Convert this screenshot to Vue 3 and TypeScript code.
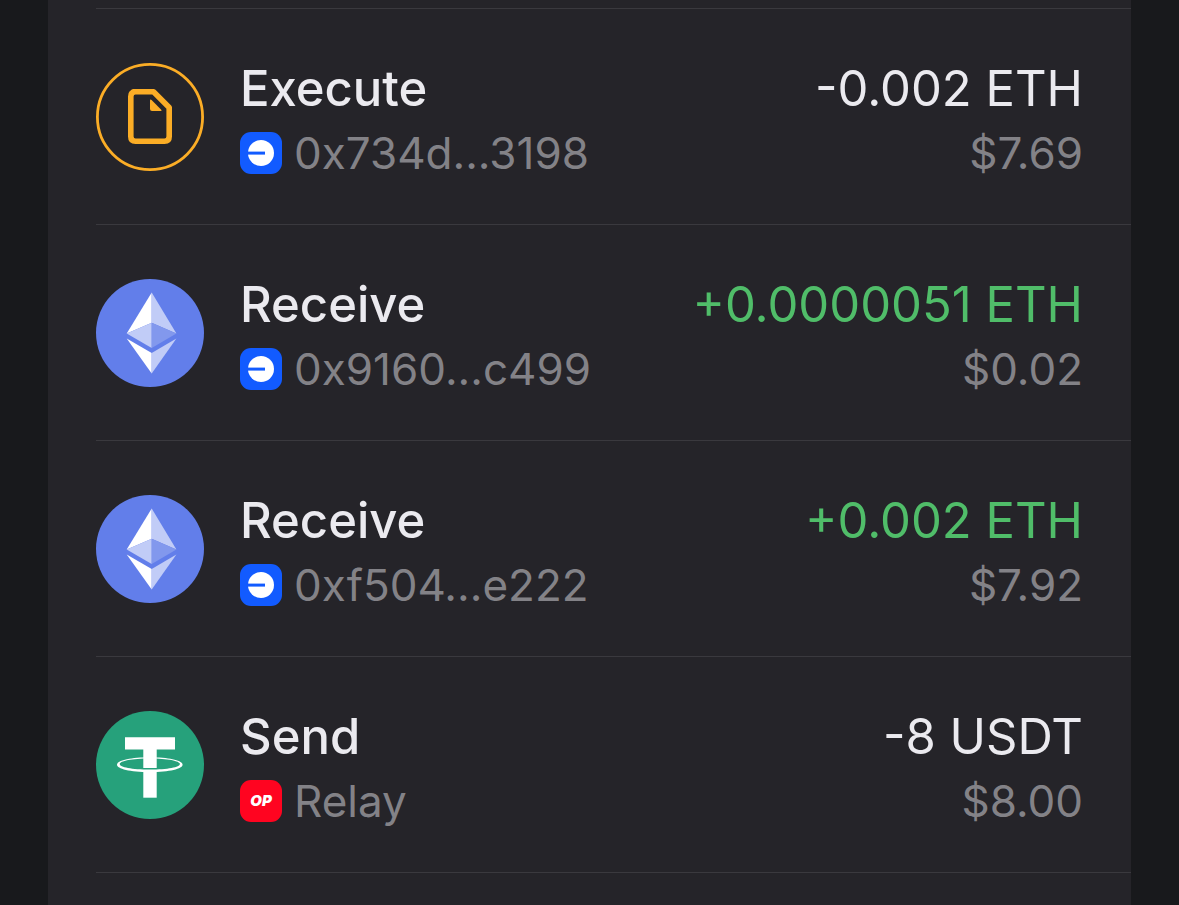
<script setup lang="ts">
type TokenIcon = 'document' | 'ethereum' | 'tether'
type Network = 'base' | 'optimism'

interface Transaction {
  id: number
  action: string
  icon: TokenIcon
  network: Network
  party: string
  amount: string
  incoming: boolean
  fiat: string
}

const transactions: Transaction[] = [
  { id: 1, action: 'Execute', icon: 'document', network: 'base', party: '0x734d...3198', amount: '-0.002 ETH', incoming: false, fiat: '$7.69' },
  { id: 2, action: 'Receive', icon: 'ethereum', network: 'base', party: '0x9160...c499', amount: '+0.0000051 ETH', incoming: true, fiat: '$0.02' },
  { id: 3, action: 'Receive', icon: 'ethereum', network: 'base', party: '0xf504...e222', amount: '+0.002 ETH', incoming: true, fiat: '$7.92' },
  { id: 4, action: 'Send', icon: 'tether', network: 'optimism', party: 'Relay', amount: '-8 USDT', incoming: false, fiat: '$8.00' },
]
</script>

<template>
  <main class="panel">
    <ul class="list">
      <li v-for="tx in transactions" :key="tx.id" class="row">
        <svg v-if="tx.icon === 'document'" class="token" viewBox="0 0 108 108" aria-hidden="true">
          <circle cx="54" cy="54" r="52.6" fill="none" stroke="#fbad26" stroke-width="2.8" />
          <path d="M37.5 28.8H57.5L73.2 44.5V73.5Q73.2 78.2 68.5 78.2H39.5Q34.8 78.2 34.8 73.5V33.5Q34.8 28.8 39.5 28.8Z" fill="none" stroke="#fbad26" stroke-width="5.6" stroke-linejoin="round" />
          <path d="M54 37.5Q54 35.6 55.6 37L65 46.4Q66.3 48 64.5 48H56Q54 48 54 46Z" fill="#fbad26" />
        </svg>
        <svg v-else-if="tx.icon === 'ethereum'" class="token" viewBox="0 0 108 108" aria-hidden="true">
          <circle cx="54" cy="54" r="54" fill="#627eea" />
          <path d="M55.7 13.5L30.7 54.5L55.7 43.7Z" fill="#fff" />
          <path d="M55.7 13.5L80.4 54.5L55.7 43.7Z" fill="#c1ccf7" />
          <path d="M30.7 54.5L55.7 43.7V69Z" fill="#c1ccf7" />
          <path d="M80.4 54.5L55.7 43.7V69Z" fill="#8298ed" />
          <path d="M30.7 59.5L55.7 74V94.5Z" fill="#fff" />
          <path d="M80.4 59.5L55.7 74V94.5Z" fill="#c1ccf7" />
        </svg>
        <svg v-else class="token" viewBox="0 0 108 108" aria-hidden="true">
          <circle cx="54" cy="54" r="54" fill="#26a17b" />
          <path fill-rule="evenodd" d="M21 53.7C21 49.7 34 46.3 53.8 46.3S86.6 49.7 86.6 53.7S73.6 61.1 53.8 61.1S21 57.7 21 53.7ZM23.7 53C23.7 56.2 36 58.6 53.8 58.6S83.9 56.2 83.9 53S71.6 47.4 53.8 47.4S23.7 49.8 23.7 53Z" fill="#fff" />
          <path d="M29 26.3H79V38.6H60.7V57H47.3V38.6H29Z" fill="#fff" />
          <path d="M47.3 59H60.7V86.7H47.3Z" fill="#fff" />
        </svg>

        <div class="details">
          <div class="line title">
            <span class="action">{{ tx.action }}</span>
            <span class="amount" :class="{ incoming: tx.incoming }">{{ tx.amount }}</span>
          </div>
          <div class="line meta">
            <span class="party">
              <svg v-if="tx.network === 'base'" class="badge" viewBox="0 0 42 42" role="img" aria-label="Base">
                <rect width="42" height="42" rx="11" fill="#125bff" />
                <circle cx="21" cy="21" r="13" fill="#fff" />
                <path d="M7.5 19.6H25V22.6H7.5Z" fill="#125bff" />
              </svg>
              <span v-else class="badge optimism">OP</span>
              <span>{{ tx.party }}</span>
            </span>
            <span>{{ tx.fiat }}</span>
          </div>
        </div>
      </li>
    </ul>
  </main>
</template>

<style>
body {
  margin: 0;
  background: #18191c;
}
</style>

<style scoped>
.panel {
  box-sizing: border-box;
  min-height: 100vh;
  margin: 0 48px;
  padding: 8px 0 0 48px;
  background: #252429;
  color: #ebeaef;
  font-family: Inter, "Liberation Sans", sans-serif;
}

.list {
  margin: 0;
  padding: 0;
  list-style: none;
  border-top: 1px solid #3a393e;
}

.row {
  display: flex;
  align-items: center;
  gap: 36px;
  padding: 47px 48px 46px 0;
  border-bottom: 1px solid #3a393e;
}

.token {
  display: block;
  flex: none;
  width: 108px;
  height: 108px;
}

.details {
  display: flex;
  flex: 1;
  flex-direction: column;
  gap: 6px;
  min-width: 0;
}

.line {
  display: flex;
  align-items: center;
  justify-content: space-between;
  gap: 24px;
  white-space: nowrap;
}

.title {
  font-size: 49px;
  line-height: 66px;
}

.action {
  font-weight: 500;
}

.incoming {
  color: #50bd69;
}

.meta {
  color: #838287;
  font-size: 44px;
  line-height: 50px;
}

.party {
  display: flex;
  align-items: center;
  gap: 12px;
}

.badge {
  display: block;
  flex: none;
  width: 42px;
  height: 42px;
}

.optimism {
  border-radius: 11px;
  background: #ff0420;
  color: #fff;
  font-size: 15px;
  font-style: italic;
  font-weight: 900;
  line-height: 42px;
  text-align: center;
}
</style>
